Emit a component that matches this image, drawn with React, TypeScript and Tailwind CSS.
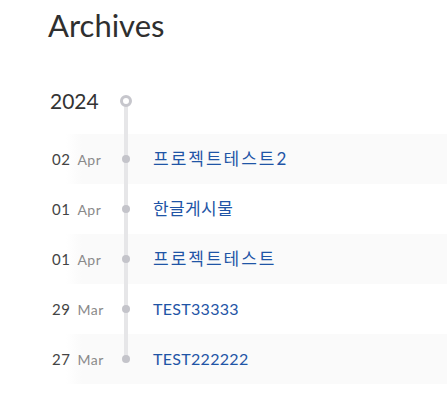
import React from "react";

const posts = [
  { day: "02", month: "Apr", title: "프로젝트테스트2", cls: "text-[17px] tracking-[2px]" },
  { day: "01", month: "Apr", title: "한글게시물", cls: "text-[17px] tracking-[0.4px]" },
  { day: "01", month: "Apr", title: "프로젝트테스트", cls: "text-[17px] tracking-[2px]" },
  { day: "29", month: "Mar", title: "TEST33333", cls: "text-[16px] tracking-[0.3px]" },
  { day: "27", month: "Mar", title: "TEST222222", cls: "text-[16px] tracking-[0.3px]" },
];

export default function App() {
  return (
    <main
      className="min-h-[407px] bg-white pl-12 text-[#333]"
      style={{ fontFamily: 'Lato, "Noto Sans CJK KR", sans-serif' }}
    >
      <h1 className="pt-[10px] mb-[27px] text-[31px] leading-none font-normal text-[#2f2f2f]">Archives</h1>

      {/* Year */}
      <div className="flex h-[66px] items-stretch">
        <div className="flex w-[72px] items-center pl-[2px] text-[21px]">2024</div>
        <div className="relative w-3">
          <div className="absolute top-1/2 bottom-0 left-1/2 w-1 -translate-x-1/2 bg-[#e6e6e8]" />
          <div className="absolute top-1/2 left-0 h-3 w-3 -translate-y-1/2 rounded-full border-[3px] border-[#c6c6cc] bg-white" />
        </div>
      </div>

      {/* Posts */}
      {posts.map((p, i) => (
        <div
          key={i}
          className={`flex h-[50px] items-stretch ${
            i % 2 === 0 ? "bg-[linear-gradient(to_right,#ffffff_18px,#fafafa_34px)]" : ""
          }`}
        >
          <div className="flex w-[74px] items-center pl-1">
            <span className="text-[15px] tracking-[0.5px] text-[#444]">{p.day}</span>
            <span className="ml-[7px] text-[14px] tracking-[0.5px] text-[#8a8a8a]">{p.month}</span>
          </div>
          <div className="relative w-2">
            <div
              className={`absolute top-0 left-1/2 w-1 -translate-x-1/2 bg-[#e6e6e8] ${
                i === posts.length - 1 ? "bottom-1/2" : "bottom-0"
              }`}
            />
            <div className="absolute top-1/2 left-0 h-2 w-2 -translate-y-1/2 rounded-full bg-[#c4c4ca]" />
          </div>
          <a href="#" className={`ml-[23px] flex items-center text-[#1f55a6] ${p.cls}`}>
            {p.title}
          </a>
        </div>
      ))}
    </main>
  );
}
